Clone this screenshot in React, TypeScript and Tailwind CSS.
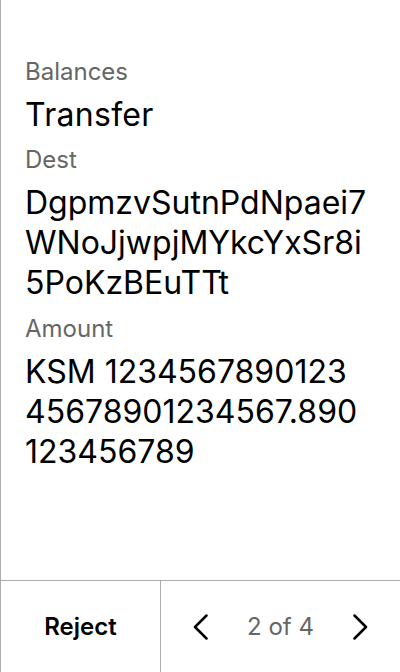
import React from "react";

const fields = [
  { label: "Dest", lines: ["DgpmzvSutnPdNpaei7", "WNoJjwpjMYkcYxSr8i", "5PoKzBEuTTt"], gap: "mt-[9px]" },
  { label: "Amount", lines: ["KSM 1234567890123", "45678901234567.890", "123456789"], gap: "mt-[10px]" },
];

function Chevron({ dir }: { dir: "left" | "right" }) {
  const d = dir === "left" ? "M13.5 1.5 L2 13 L13.5 24.5" : "M2.5 1.5 L14 13 L2.5 24.5";
  return (
    <svg width="16" height="26" viewBox="0 0 16 26" fill="none" aria-hidden="true">
      <path d={d} stroke="#000" strokeWidth="2.5" strokeLinecap="round" strokeLinejoin="round" />
    </svg>
  );
}

export default function App() {
  return (
    <div
      className="flex h-[672px] w-[400px] flex-col border-l border-[#ababab] bg-white text-black"
      style={{ fontFamily: "Inter, 'Noto Sans', sans-serif" }}
    >
      <div className="flex-1 pl-6 pr-4 pt-[56px]">
        <p className="text-[24px] leading-[32px] text-[#666]">Balances</p>
        <h1 className="mt-[7px] text-[32px] leading-[40px] tracking-[0.3px]">Transfer</h1>
        {fields.map((field) => (
          <div key={field.label} className={field.gap}>
            <p className="text-[24px] leading-[32px] text-[#666]">{field.label}</p>
            <p className="mt-[7px] text-[32px] leading-[40px]">
              {field.lines.map((line) => (
                <span key={line} className="block whitespace-nowrap">
                  {line}
                </span>
              ))}
            </p>
          </div>
        ))}
      </div>

      <div className="flex h-[92px] border-t border-[#ababab]">
        <button className="flex w-[160px] items-center justify-center border-r border-[#ababab] text-[24px] font-semibold">
          Reject
        </button>
        <div className="flex flex-1 items-center justify-between px-8">
          <Chevron dir="left" />
          <span className="text-[24px] text-[#666]">2 of 4</span>
          <Chevron dir="right" />
        </div>
      </div>
    </div>
  );
}
